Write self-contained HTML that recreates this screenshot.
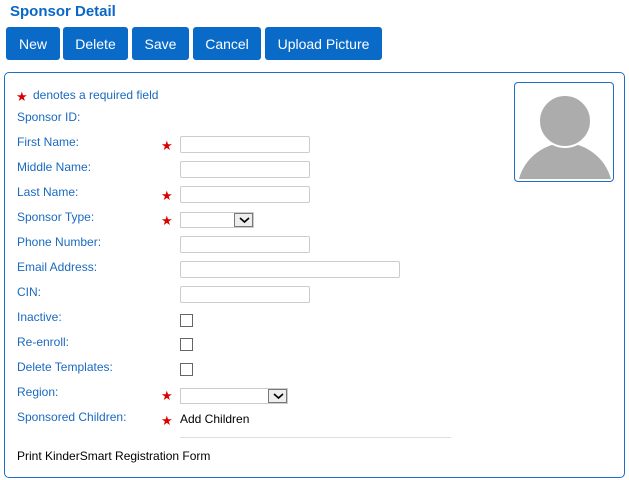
<!DOCTYPE html>
<html><head><meta charset="utf-8"><style>
*{box-sizing:border-box}
body{margin:0;width:629px;height:480px;background:#fff;font-family:"Liberation Sans",Arial,sans-serif;position:relative;overflow:hidden}
.t{position:absolute;left:10px;top:3px;font-size:15px;font-weight:bold;color:#0b67c6}
.b{position:absolute;top:27px;height:33px;background:#0a6ac8;color:#fff;border-radius:3px;font-size:14px;display:flex;align-items:center;justify-content:center}
.panel{position:absolute;left:4px;top:72px;width:621px;height:406px;border:1px solid #1d6fc4;border-radius:5px}
.l{position:absolute;left:17px;font-size:12px;color:#1a6ac0;line-height:14px}
.s{position:absolute;left:161px;color:#d00;font-size:13px;line-height:12px}
.i{position:absolute;left:180px;height:17px;border:1px solid #ccc;border-radius:2px;background:#fff}
.sel{position:absolute;left:180px;height:16px;border:1px solid #ccc;background:#fff}
.sel span{position:absolute;right:0;top:0;width:19px;height:14px;border:1px solid #777;background:#eee}
.sel svg{position:absolute;left:4px;top:3px}
.c{position:absolute;left:180px;width:13px;height:13px;border:1px solid #666}
.photo{position:absolute;left:514px;top:82px;width:100px;height:100px;border:1px solid #1d6fc4;border-radius:4px;overflow:hidden}
</style></head><body>
<div class="t">Sponsor Detail</div>
<div class="b" style="left:6px;width:54px">New</div>
<div class="b" style="left:63px;width:65px">Delete</div>
<div class="b" style="left:132px;width:57px">Save</div>
<div class="b" style="left:193px;width:68px">Cancel</div>
<div class="b" style="left:265px;width:117px">Upload Picture</div>
<div class="panel"></div>
<div class="photo"><svg width="100" height="100" viewBox="0 0 100 100"><path d="M4 96 C10 74 28 64 40 61 Q50 68 60 61 C72 64 90 74 96 96 Z" fill="#acacac"/><circle cx="50" cy="38" r="26" fill="#acacac" stroke="#fff" stroke-width="2"/></svg></div>
<div class="s" style="left:16px;top:91px">★</div>
<div class="l" style="left:33px;top:88px">denotes a required field</div>
<div class="l" style="top:110px">Sponsor ID:</div>
<div class="l" style="top:135px">First Name:</div><div class="s" style="top:140px">★</div><div class="i" style="top:136px;width:130px"></div>
<div class="l" style="top:160px">Middle Name:</div><div class="i" style="top:161px;width:130px"></div>
<div class="l" style="top:185px">Last Name:</div><div class="s" style="top:190px">★</div><div class="i" style="top:186px;width:130px"></div>
<div class="l" style="top:210px">Sponsor Type:</div><div class="s" style="top:215px">★</div><div class="sel" style="top:212px;width:74px"><span><svg width="11" height="7"><path d="M1 1L5.5 5L10 1" stroke="#000" stroke-width="1.6" fill="none"/></svg></span></div>
<div class="l" style="top:235px">Phone Number:</div><div class="i" style="top:236px;width:130px"></div>
<div class="l" style="top:260px">Email Address:</div><div class="i" style="top:261px;width:220px"></div>
<div class="l" style="top:285px">CIN:</div><div class="i" style="top:286px;width:130px"></div>
<div class="l" style="top:310px">Inactive:</div><div class="c" style="top:314px"></div>
<div class="l" style="top:335px">Re-enroll:</div><div class="c" style="top:338px"></div>
<div class="l" style="top:360px">Delete Templates:</div><div class="c" style="top:363px"></div>
<div class="l" style="top:385px">Region:</div><div class="s" style="top:390px">★</div><div class="sel" style="top:388px;width:108px"><span><svg width="11" height="7"><path d="M1 1L5.5 5L10 1" stroke="#000" stroke-width="1.6" fill="none"/></svg></span></div>
<div class="l" style="top:410px">Sponsored Children:</div><div class="s" style="top:415px">★</div>
<div style="position:absolute;left:180px;top:412px;font-size:12px;color:#000">Add Children</div>
<div style="position:absolute;left:180px;top:437px;width:271px;height:1px;background:#ddd"></div>
<div style="position:absolute;left:17px;top:449px;font-size:12px;color:#000">Print KinderSmart Registration Form</div>
</body></html>
